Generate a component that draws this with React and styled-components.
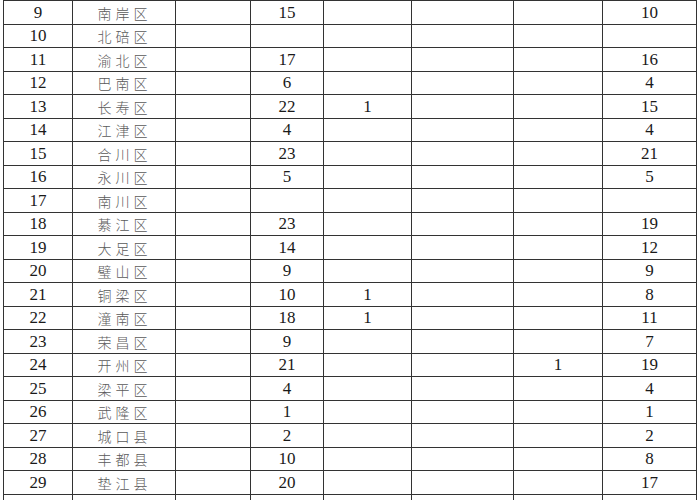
import React from "react";
import styled, { createGlobalStyle } from "styled-components";

const Global = createGlobalStyle`
  html, body { margin: 0; padding: 0; background: #fff; overflow: hidden; }
`;

const Page = styled.div`
  width: 700px;
  height: 500px;
  overflow: hidden;
  padding-left: 3px;
  box-sizing: border-box;
`;

const Table = styled.table`
  border-collapse: collapse;
  table-layout: fixed;
  width: 693px;
`;

const Row = styled.tr`
  height: ${(p) => p.$h}px;
`;

const Cell = styled.td`
  border: 1px solid #333;
  padding: 0;
  text-align: center;
  vertical-align: middle;
  font-family: "Liberation Serif", "Times New Roman", serif;
  font-size: 17px;
  line-height: 20px;
  color: #1a1a1a;
  box-sizing: border-box;
`;

const NameCell = styled(Cell)`
  font-family: "Noto Sans CJK SC", sans-serif;
  font-weight: 300;
  font-size: 14px;
  letter-spacing: 4px;
  padding-left: 1px;
  color: #5a5a5a;
`;

const widths = [69, 103, 75, 73, 88, 102, 89, 94];

const rows = [
  ["9", "南岸区", "", "15", "", "", "", "10"],
  ["10", "北碚区", "", "", "", "", "", ""],
  ["11", "渝北区", "", "17", "", "", "", "16"],
  ["12", "巴南区", "", "6", "", "", "", "4"],
  ["13", "长寿区", "", "22", "1", "", "", "15"],
  ["14", "江津区", "", "4", "", "", "", "4"],
  ["15", "合川区", "", "23", "", "", "", "21"],
  ["16", "永川区", "", "5", "", "", "", "5"],
  ["17", "南川区", "", "", "", "", "", ""],
  ["18", "綦江区", "", "23", "", "", "", "19"],
  ["19", "大足区", "", "14", "", "", "", "12"],
  ["20", "璧山区", "", "9", "", "", "", "9"],
  ["21", "铜梁区", "", "10", "1", "", "", "8"],
  ["22", "潼南区", "", "18", "1", "", "", "11"],
  ["23", "荣昌区", "", "9", "", "", "", "7"],
  ["24", "开州区", "", "21", "", "", "1", "19"],
  ["25", "梁平区", "", "4", "", "", "", "4"],
  ["26", "武隆区", "", "1", "", "", "", "1"],
  ["27", "城口县", "", "2", "", "", "", "2"],
  ["28", "丰都县", "", "10", "", "", "", "8"],
  ["29", "垫江县", "", "20", "", "", "", "17"],
  ["", "", "", "", "", "", "", ""],
];

const PITCH = 23.5;
const rowHeight = (i) => Math.round((i + 1) * PITCH) - Math.round(i * PITCH);

export default function App() {
  return (
    <>
      <Global />
      <Page>
        <Table>
          <colgroup>
            {widths.map((w, i) => (
              <col key={i} style={{ width: w }} />
            ))}
          </colgroup>
          <tbody>
            {rows.map((r, i) => (
              <Row key={i} $h={rowHeight(i)}>
                {r.map((c, j) =>
                  j === 1 ? (
                    <NameCell key={j}>{c}</NameCell>
                  ) : (
                    <Cell key={j}>{c}</Cell>
                  )
                )}
              </Row>
            ))}
          </tbody>
        </Table>
      </Page>
    </>
  );
}
